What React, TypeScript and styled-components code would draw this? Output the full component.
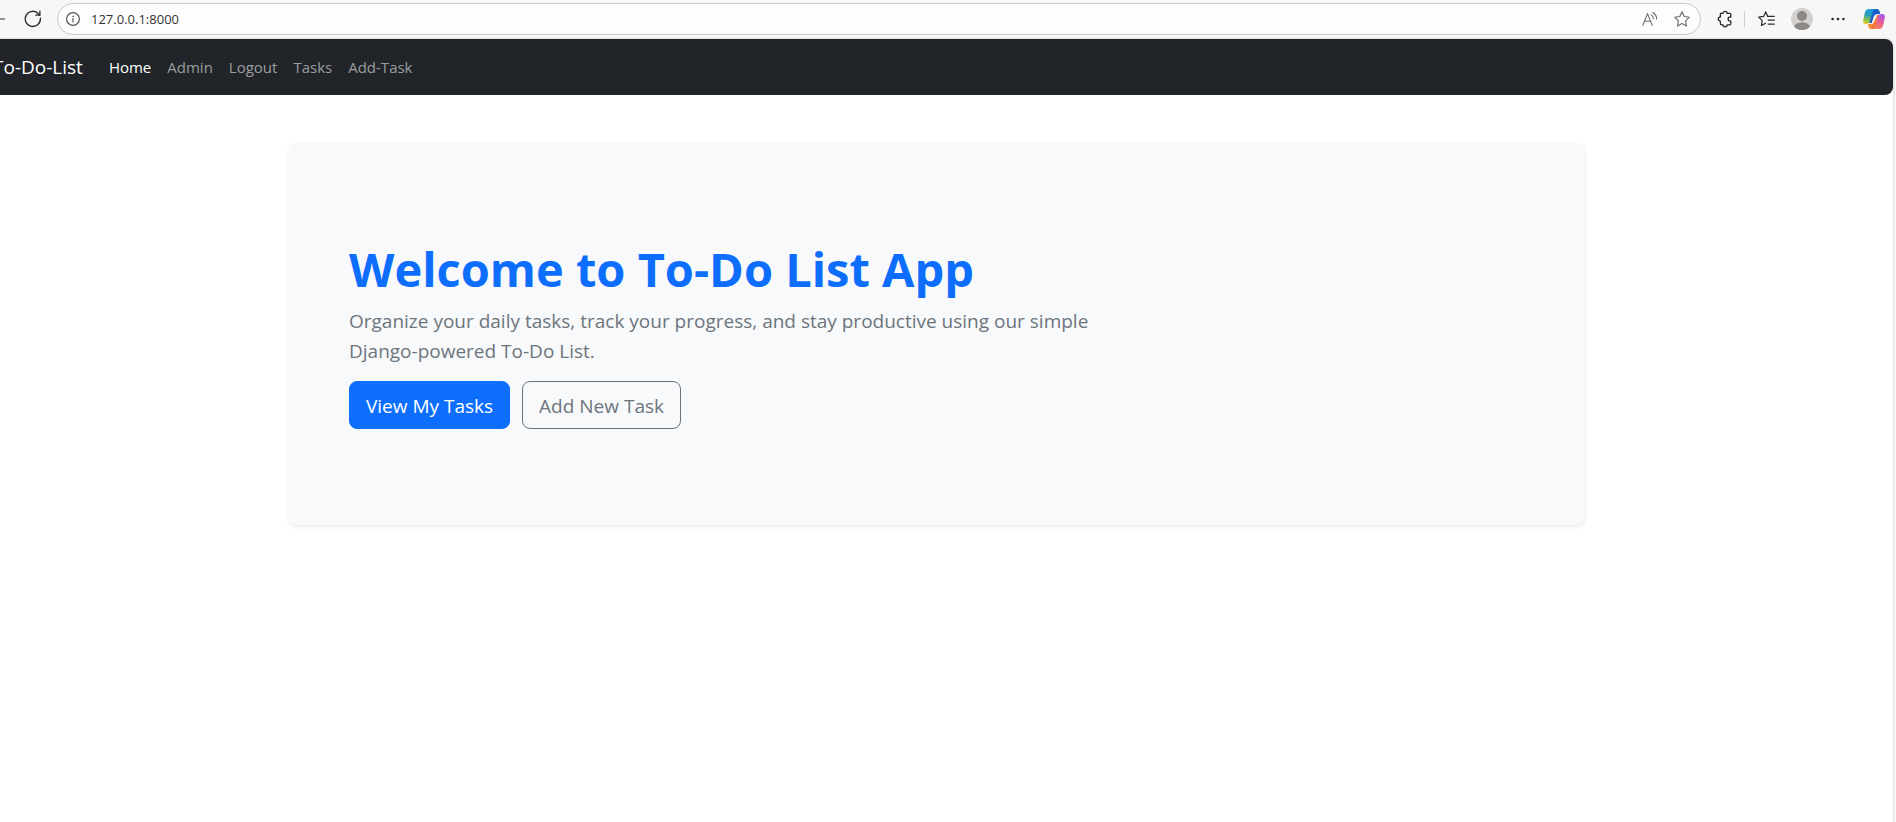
import React from "react";
import styled, { createGlobalStyle } from "styled-components";

const GlobalStyle = createGlobalStyle`
  *, *::before, *::after { box-sizing: border-box; }
  html, body, #root { height: 100%; }
  body {
    margin: 0;
    overflow: hidden;
    background: #f7f7f7;
    color: #212529;
    font-family: "Segoe UI", "Open Sans", "Noto Sans", sans-serif;
    font-size: 16px;
    line-height: 24px;
  }
`;

const Window = styled.div`
  display: flex;
  flex-direction: column;
  height: 100%;
`;

const Toolbar = styled.header`
  display: flex;
  align-items: center;
  flex: none;
  height: 39px;
  padding: 0 4px 1px 0;
  background: #f7f7f7;
`;

const IconButton = styled.button<{ $width: number; $color?: string }>`
  display: flex;
  align-items: center;
  justify-content: center;
  flex: none;
  width: ${(p) => p.$width}px;
  height: 32px;
  padding: 0;
  border: 0;
  background: none;
  color: ${(p) => p.$color ?? "#2b2b2b"};

  svg {
    display: block;
    flex: none;
    overflow: visible;
  }
`;

const BackButton = styled(IconButton)`
  justify-content: flex-start;
`;

const AddressBar = styled.div`
  display: flex;
  align-items: center;
  flex: 1;
  height: 32px;
  margin: 0 8px;
  padding: 0 2px 0 0;
  border: 1px solid #c9c9c9;
  border-radius: 16px;
  background: #fdfdfd;
`;

const AddressInput = styled.input`
  flex: 1;
  min-width: 0;
  height: 24px;
  padding: 0 3px;
  border: 0;
  outline: 0;
  background: none;
  color: #333;
  font: inherit;
  font-size: 13px;
`;

const Divider = styled.span`
  flex: none;
  width: 1px;
  height: 16px;
  margin: 0 3px;
  background: #cfcfcf;
`;

const Page = styled.div`
  flex: 1;
  min-height: 0;
  margin: 0 3px 0 -19px;
  border-radius: 8px 8px 0 0;
  background: #fff;
  box-shadow: 0 0 2px rgba(0, 0, 0, 0.3);
`;

const Navbar = styled.nav`
  display: flex;
  align-items: center;
  height: 56px;
  padding: 0 12px;
  border-radius: 8px;
  background: #212529;
`;

const Brand = styled.a`
  margin-right: 18px;
  color: #fff;
  font-size: 19px;
  text-decoration: none;
  white-space: nowrap;
`;

const NavList = styled.ul`
  display: flex;
  margin: 0;
  padding: 0;
  list-style: none;
`;

const NavLink = styled.a<{ $active?: boolean }>`
  display: block;
  padding: 8px;
  color: ${(p) => (p.$active ? "#fff" : "#9b9d9f")};
  font-size: 15px;
  text-decoration: none;
`;

const Container = styled.main`
  max-width: 1320px;
  margin: 48px auto 0;
  padding: 0 12px;
`;

const Hero = styled.section`
  padding: 96px 60px;
  border-radius: 8px;
  background: #f8f9fa;
  box-shadow: 0 2px 4px rgba(0, 0, 0, 0.075);
`;

const Title = styled.h1`
  margin: 0 0 6px;
  color: #0d6efd;
  font-size: 47px;
  font-weight: 700;
  line-height: 61px;
`;

const Lead = styled.p`
  max-width: 780px;
  margin: 0 0 15px;
  color: #6c757d;
  font-size: 19px;
  line-height: 30px;
`;

const Actions = styled.div`
  display: flex;
  gap: 12px;
`;

const ActionLink = styled.a<{ $primary?: boolean }>`
  padding: 9px 16px 7px;
  border: 1px solid ${(p) => (p.$primary ? "#0d6efd" : "#6c757d")};
  border-radius: 8px;
  background: ${(p) => (p.$primary ? "#0d6efd" : "transparent")};
  color: ${(p) => (p.$primary ? "#fff" : "#6c757d")};
  font-size: 19px;
  line-height: 30px;
  text-decoration: none;
`;

const stroke = {
  fill: "none",
  stroke: "currentColor",
  strokeLinecap: "round" as const,
  strokeLinejoin: "round" as const,
};

const BackIcon = () => (
  <svg width="6" height="16" viewBox="0 0 6 16" {...stroke} strokeWidth="1.2">
    <path d="M-8 8H4.5" />
  </svg>
);

const ReloadIcon = () => (
  <svg width="18" height="18" viewBox="0 0 18 18" {...stroke} strokeWidth="1.3">
    <path d="M16.4 8.2A7.6 7.6 0 1 1 14.4 3.7L15.7 5" />
    <path d="M15.9 1.2V5.2H11.8" />
  </svg>
);

const InfoIcon = () => (
  <svg width="14" height="14" viewBox="0 0 14 14" {...stroke} strokeWidth="1.2">
    <circle cx="7" cy="7" r="6.4" />
    <path d="M7 6.5V10" />
    <circle cx="7" cy="4.3" r="0.4" fill="currentColor" strokeWidth="0.7" />
  </svg>
);

const ReadAloudIcon = () => (
  <svg width="16" height="14" viewBox="0 0 16 14" {...stroke} strokeWidth="1.1">
    <path d="M0.8 13.4L5.5 1.6L10.2 13.4M2.5 9.2H8.5" />
    <path d="M9.2 2.6Q11.2 4 11.3 6.8M10.8 0.5Q14.7 2.8 14.6 7" />
  </svg>
);

const starPath =
  "M8 0.8L10.2 5.5L15.3 6.2L11.6 9.8L12.5 14.9L8 12.5L3.5 14.9L4.4 9.8L0.7 6.2L5.8 5.5Z";

const StarIcon = () => (
  <svg width="16" height="16" viewBox="0 0 16 16" {...stroke} strokeWidth="1.1">
    <path d={starPath} />
  </svg>
);

const ExtensionsIcon = () => (
  <svg width="16" height="16" viewBox="0 0 16 16" {...stroke} strokeWidth="1.3">
    <path d="M3.4 2.4H6A2.1 2.1 0 0 1 10.2 2.4H12.7A1.1 1.1 0 0 1 13.8 3.5V6H13.2A2 2 0 0 0 13.2 10.2H13.8V12.7A1.1 1.1 0 0 1 12.7 13.8H10.2A2.1 2.1 0 0 1 6 13.8H4.5A1.1 1.1 0 0 1 3.4 12.7V10.2A2.1 2.1 0 0 1 3.4 6Z" />
  </svg>
);

const FavoritesIcon = () => (
  <svg width="17" height="16" viewBox="0 0 17 16" {...stroke} strokeWidth="1.2">
    <path d="M9.6 5.1L7.7 0.9L5.6 5.4L0.7 6.1L4.2 9.6L3.4 14.5L7.6 12.3" />
    <path d="M9.6 5.3H16.3M10.2 9.2H16.3M10.2 13.1H16.3" />
  </svg>
);

const ProfileIcon = () => (
  <svg width="22" height="22" viewBox="0 0 22 22">
    <defs>
      <clipPath id="profile-clip">
        <circle cx="11" cy="11" r="11" />
      </clipPath>
    </defs>
    <circle cx="11" cy="11" r="11" fill="#d3d1d0" />
    <g clipPath="url(#profile-clip)" fill="#8c8886">
      <circle cx="11" cy="8" r="5" />
      <ellipse cx="11" cy="19.5" rx="8" ry="5.2" />
    </g>
  </svg>
);

const MoreIcon = () => (
  <svg width="14" height="4" viewBox="0 0 14 4" fill="currentColor">
    <circle cx="1.6" cy="2" r="1.3" />
    <circle cx="7" cy="2" r="1.3" />
    <circle cx="12.4" cy="2" r="1.3" />
  </svg>
);

const CopilotIcon = () => (
  <svg width="22" height="20" viewBox="0 0 22 20">
    <defs>
      <linearGradient id="copilot-left" x1="0.5" y1="0" x2="0.3" y2="1">
        <stop offset="0" stopColor="#1c9bea" />
        <stop offset="0.4" stopColor="#239fb8" />
        <stop offset="0.75" stopColor="#8cc24a" />
        <stop offset="1" stopColor="#e8c62b" />
      </linearGradient>
      <linearGradient id="copilot-top" x1="0" y1="0" x2="1" y2="1">
        <stop offset="0" stopColor="#1976d6" />
        <stop offset="1" stopColor="#173fb0" />
      </linearGradient>
      <linearGradient id="copilot-right" x1="0.7" y1="0" x2="0.4" y2="1">
        <stop offset="0" stopColor="#a25af0" />
        <stop offset="0.5" stopColor="#e9589f" />
        <stop offset="1" stopColor="#fb8a5c" />
      </linearGradient>
      <linearGradient id="copilot-bottom" x1="0" y1="0" x2="1" y2="0.6">
        <stop offset="0" stopColor="#f7b52c" />
        <stop offset="1" stopColor="#f0633c" />
      </linearGradient>
    </defs>
    <path
      d="M6 0H13.8C15.6 0 16.2 1 16.6 2.4L17.3 5H14.6C12.8 5 12 5.8 11.5 7.2L9.2 14H6Z"
      fill="url(#copilot-top)"
    />
    <path
      d="M16 20H8.2C6.4 20 5.8 19 5.4 17.6L4.7 15H7.4C9.2 15 10 14.2 10.5 12.8L12.8 6H16Z"
      fill="url(#copilot-bottom)"
    />
    <path
      d="M6.4 0H12C10.6 0 10 1.4 9.5 3L7.2 11.6C6.5 14 5.6 15 3.8 15H2.7C0.6 15 -0.3 13.4 0.2 11L1.9 3.6C2.6 1 4.2 0 6.4 0Z"
      fill="url(#copilot-left)"
    />
    <path
      d="M15.6 20H10C11.4 20 12 18.6 12.5 17L14.8 8.4C15.5 6 16.4 5 18.2 5H19.3C21.4 5 22.3 6.6 21.8 9L20.1 16.4C19.4 19 17.8 20 15.6 20Z"
      fill="url(#copilot-right)"
    />
    <path d="M12.4 6.2H14.4L10 14.4H8.6L10.6 7.9C11 6.7 11.4 6.2 12.4 6.2Z" fill="#f7f7f7" />
  </svg>
);

const navItems = ["Home", "Admin", "Logout", "Tasks", "Add-Task"];

export default function App() {
  return (
    <>
      <GlobalStyle />
      <Window>
        <Toolbar>
          <BackButton $width={17} aria-label="Back">
            <BackIcon />
          </BackButton>
          <IconButton $width={32} aria-label="Reload">
            <ReloadIcon />
          </IconButton>
          <AddressBar>
            <IconButton $width={30} $color="#555" aria-label="Site information">
              <InfoIcon />
            </IconButton>
            <AddressInput aria-label="Address" defaultValue="127.0.0.1:8000" />
            <IconButton $width={32} $color="#6b6b6b" aria-label="Read aloud">
              <ReadAloudIcon />
            </IconButton>
            <IconButton $width={32} $color="#6b6b6b" aria-label="Add to favorites">
              <StarIcon />
            </IconButton>
          </AddressBar>
          <IconButton $width={32} aria-label="Extensions">
            <ExtensionsIcon />
          </IconButton>
          <Divider />
          <IconButton $width={36} aria-label="Favorites">
            <FavoritesIcon />
          </IconButton>
          <IconButton $width={36} aria-label="Profile">
            <ProfileIcon />
          </IconButton>
          <IconButton $width={36} aria-label="Settings and more">
            <MoreIcon />
          </IconButton>
          <IconButton $width={36} aria-label="Copilot">
            <CopilotIcon />
          </IconButton>
        </Toolbar>
        <Page>
          <Navbar>
            <Brand href="#">To-Do-List</Brand>
            <NavList>
              {navItems.map((item, index) => (
                <li key={item}>
                  <NavLink href="#" $active={index === 0}>
                    {item}
                  </NavLink>
                </li>
              ))}
            </NavList>
          </Navbar>
          <Container>
            <Hero>
              <Title>Welcome to To-Do List App</Title>
              <Lead>
                Organize your daily tasks, track your progress, and stay productive using our simple
                Django-powered To-Do List.
              </Lead>
              <Actions>
                <ActionLink href="#" $primary>
                  View My Tasks
                </ActionLink>
                <ActionLink href="#">Add New Task</ActionLink>
              </Actions>
            </Hero>
          </Container>
        </Page>
      </Window>
    </>
  );
}
